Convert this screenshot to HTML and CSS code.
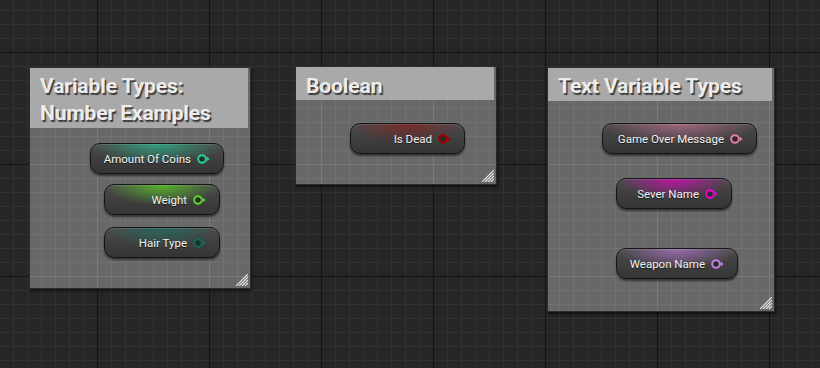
FILE: index.html
```html
<!DOCTYPE html>
<html lang="en">
<head>
    <meta charset="UTF-8">
    <title>Blueprint Variables</title>
    <link rel="stylesheet" href="styles.css">
</head>
<body>
    <div class="graph">
        <div class="comment comment-numbers">
            <div class="comment-title">Variable Types:<br>Number Examples</div>
            <div class="var-node pin-int node-coins">
                <span class="var-name">Amount Of Coins</span>
                <svg class="pin" width="13" height="10" viewBox="0 0 13 10"><circle cx="5" cy="5" r="3.8"/><path d="M9.8 2.6 L12.6 5 L9.8 7.4 Z"/></svg>
            </div>
            <div class="var-node pin-float node-weight">
                <span class="var-name">Weight</span>
                <svg class="pin" width="13" height="10" viewBox="0 0 13 10"><circle cx="5" cy="5" r="3.8"/><path d="M9.8 2.6 L12.6 5 L9.8 7.4 Z"/></svg>
            </div>
            <div class="var-node pin-byte node-hair">
                <span class="var-name">Hair Type</span>
                <svg class="pin" width="13" height="10" viewBox="0 0 13 10"><circle cx="5" cy="5" r="3.8"/><path d="M9.8 2.6 L12.6 5 L9.8 7.4 Z"/></svg>
            </div>
            <svg class="grip" width="12" height="12" viewBox="0 0 12 12"><path d="M12 0 L0 12 M12 3 L3 12 M12 6 L6 12 M12 9 L9 12"/></svg>
        </div>

        <div class="comment comment-boolean">
            <div class="comment-title">Boolean</div>
            <div class="var-node pin-bool node-dead">
                <span class="var-name">Is Dead</span>
                <svg class="pin" width="13" height="10" viewBox="0 0 13 10"><circle cx="5" cy="5" r="3.8"/><path d="M9.8 2.6 L12.6 5 L9.8 7.4 Z"/></svg>
            </div>
            <svg class="grip" width="12" height="12" viewBox="0 0 12 12"><path d="M12 0 L0 12 M12 3 L3 12 M12 6 L6 12 M12 9 L9 12"/></svg>
        </div>

        <div class="comment comment-text">
            <div class="comment-title">Text Variable Types</div>
            <div class="var-node pin-text node-gameover">
                <span class="var-name">Game Over Message</span>
                <svg class="pin" width="13" height="10" viewBox="0 0 13 10"><circle cx="5" cy="5" r="3.8"/><path d="M9.8 2.6 L12.6 5 L9.8 7.4 Z"/></svg>
            </div>
            <div class="var-node pin-string node-server">
                <span class="var-name">Sever Name</span>
                <svg class="pin" width="13" height="10" viewBox="0 0 13 10"><circle cx="5" cy="5" r="3.8"/><path d="M9.8 2.6 L12.6 5 L9.8 7.4 Z"/></svg>
            </div>
            <div class="var-node pin-name node-weapon">
                <span class="var-name">Weapon Name</span>
                <svg class="pin" width="13" height="10" viewBox="0 0 13 10"><circle cx="5" cy="5" r="3.8"/><path d="M9.8 2.6 L12.6 5 L9.8 7.4 Z"/></svg>
            </div>
            <svg class="grip" width="12" height="12" viewBox="0 0 12 12"><path d="M12 0 L0 12 M12 3 L3 12 M12 6 L6 12 M12 9 L9 12"/></svg>
        </div>
    </div>
</body>
</html>
```

FILE: styles.css
```css
html, body {
    margin: 0;
    height: 100%;
}

body {
    font-family: Roboto, 'Liberation Sans', sans-serif;
    background-color: #262626;
    background-image:
        linear-gradient(to right, #141414 1px, transparent 1px),
        linear-gradient(to bottom, #141414 1px, transparent 1px),
        linear-gradient(to right, #313131 1px, transparent 1px),
        linear-gradient(to bottom, #313131 1px, transparent 1px);
    background-size: 112px 112px, 112px 112px, 14px 14px, 14px 14px;
    background-position: 97px 52px, 97px 52px, 13px 10px, 13px 10px;
    overflow: hidden;
}

.graph {
    position: relative;
    width: 820px;
    height: 368px;
}

/* comment boxes */
.comment {
    position: absolute;
    box-sizing: border-box;
    border: 1px solid #2c2c2c;
    background-color: #686868;
    background-image:
        linear-gradient(to right, #7a7a7a 1px, transparent 1px),
        linear-gradient(to bottom, #7a7a7a 1px, transparent 1px),
        linear-gradient(to right, #717171 1px, transparent 1px),
        linear-gradient(to bottom, #717171 1px, transparent 1px);
    background-size: 112px 112px, 112px 112px, 14px 14px, 14px 14px;
    background-position: 97px 52px, 97px 52px, 13px 10px, 13px 10px;
    background-attachment: fixed;
    box-shadow: 1px 2px 2px rgba(0,0,0,0.55);
}

.comment-numbers {
    left: 29px;
    top: 67px;
    width: 222px;
    height: 222px;
}

.comment-boolean {
    left: 295px;
    top: 66px;
    width: 202px;
    height: 119px;
}

.comment-text {
    left: 547px;
    top: 67px;
    width: 228px;
    height: 245px;
}

.comment-title {
    margin: 0 2px 0 0;
    padding: 5px 10px 1px;
    background: #a9a9a9;
    color: #ececec;
    font-size: 21px;
    font-weight: 700;
    line-height: 27px;
    letter-spacing: -0.1px;
    text-shadow: 1.5px 1.5px 1px #3a3a3a;
}

.comment-boolean .comment-title {
    padding-top: 6px;
    padding-bottom: 0;
}

.grip {
    position: absolute;
    right: 2px;
    bottom: 2px;
}

.grip path {
    stroke: #e8e8e8;
    stroke-width: 1.2;
}

/* variable getter nodes */
.var-node {
    position: absolute;
    box-sizing: border-box;
    height: 31px;
    display: flex;
    align-items: center;
    justify-content: flex-end;
    gap: 6px;
    padding-right: 13px;
    border: 1px solid #151515;
    border-radius: 10px;
    background:
        radial-gradient(ellipse 50% 70% at 50% 0%, var(--glow) 0%, transparent 100%),
        linear-gradient(to bottom, #4c4c4c 0%, #404040 45%, #353535 100%);
    box-shadow: inset 0 1px 0 rgba(255,255,255,0.12), 0 2px 2px rgba(0,0,0,0.5);
}

.var-name {
    color: #f2f2f2;
    font-size: 11.5px;
    text-shadow: 0 1px 1px rgba(0,0,0,0.6);
}

.pin {
    display: block;
}

.pin circle {
    fill: #2a2a2a;
    stroke: var(--pin);
    stroke-width: 2;
}

.pin path {
    fill: var(--pin);
}

.pin-int    { --pin: #1fd39e; --glow: rgba(31, 211, 158, 0.6); }
.pin-float  { --pin: #5bd320; --glow: rgba(91, 211, 32, 0.75); }
.pin-byte   { --pin: #0d6c5e; --glow: rgba(16, 120, 104, 0.6); }
.pin-bool   { --pin: #a00000; --glow: rgba(150, 20, 20, 0.6); }
.pin-text   { --pin: #e27ca8; --glow: rgba(226, 124, 168, 0.55); }
.pin-string { --pin: #f000d0; --glow: rgba(230, 0, 200, 0.7); }
.pin-name   { --pin: #c47ee2; --glow: rgba(196, 126, 226, 0.65); }

.node-coins    { left: 60px; top: 75px; width: 134px; }
.node-weight   { left: 74px; top: 116px; width: 116px; }
.node-hair     { left: 74px; top: 159px; width: 116px; }
.node-dead     { left: 54px; top: 56px; width: 115px; }
.node-gameover { left: 54px; top: 55px; width: 155px; }
.node-server   { left: 68px; top: 110px; width: 116px; }
.node-weapon   { left: 68px; top: 180px; width: 122px; }
```
